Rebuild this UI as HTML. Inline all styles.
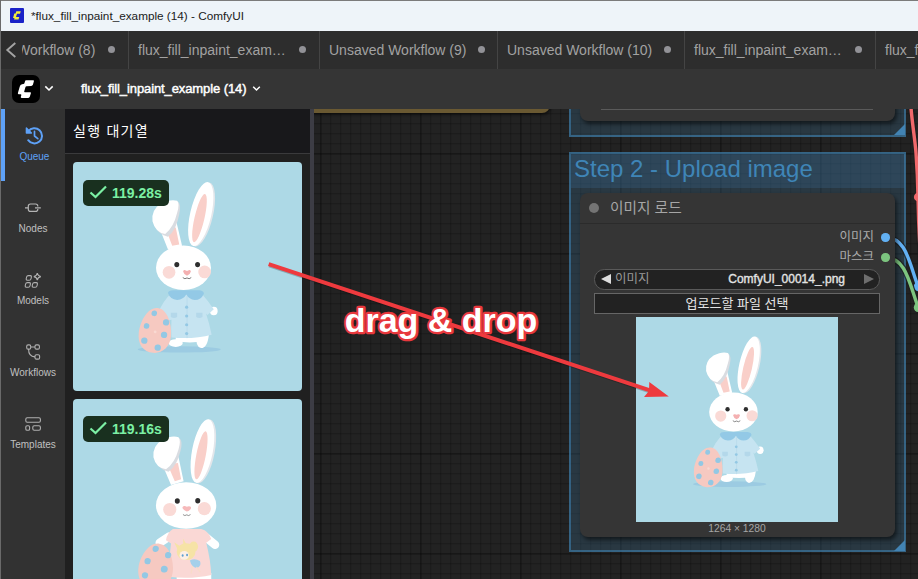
<!DOCTYPE html>
<html lang="ko">
<head>
<meta charset="utf-8">
<title>*flux_fill_inpaint_example (14) - ComfyUI</title>
<style>
*{box-sizing:border-box;margin:0;padding:0}
html,body{width:918px;height:579px;overflow:hidden;background:#222}
body{position:relative;font-family:"Liberation Sans","Noto Sans CJK KR",sans-serif;color:#ddd}
.abs{position:absolute}
#win{position:absolute;left:0;top:0;width:918px;height:579px;overflow:hidden;background:#222}
/* title bar */
#titlebar{left:0;top:0;width:918px;height:31px;background:#eef4f9;border-top:1px solid #7b7b7b}
#titlebar .ico{left:10px;top:6.5px;width:14px;height:15px;background:#1a22c8;border-radius:1px}
#titlebar .txt{left:31px;top:7px;font-size:11.75px;line-height:16px;color:#1b1b1b;white-space:nowrap}
/* tab bar */
#tabbar{left:0;top:31px;width:918px;height:38px;background:#2d2d2d}
.tab{position:absolute;top:0;height:38px;border-right:1px solid #444;font-size:14px;line-height:38px;color:#a2a2a2;white-space:nowrap;overflow:hidden}
.tab .t{position:absolute;top:0;left:9px}
.tab .dot{position:absolute;top:15px;width:7px;height:7px;border-radius:50%;background:#929297;margin-left:-.6px}
/* menu bar */
#menubar{left:0;top:69px;width:918px;height:40px;background:#353535}
#logo{left:12px;top:75px;width:28px;height:28px;border-radius:7px;background:#000}
#wfname{left:81px;top:80px;font-size:13px;line-height:18px;color:#fff;white-space:nowrap;letter-spacing:-0.1px;-webkit-text-stroke:.45px #fff}
/* sidebar */
#sidebar{left:0;top:109px;width:65px;height:470px;background:#323232}
.sitem{position:absolute;left:1px;width:64px;height:72px;text-align:center;font-size:10px;color:#c0c0c0}
.sitem .lbl{position:absolute;left:0;width:64px;top:42.4px;line-height:12px;font-size:10px}
.sitem svg{position:absolute}
#activebar{left:1px;top:109px;width:4px;height:72px;background:#5ea1f7}
/* queue panel */
#panel{left:65px;top:109px;width:245px;height:470px;background:#202020}
#panelhead{left:65px;top:109px;width:245px;height:45px;background:#18181b;border-bottom:1px solid #3a3a3c}
#panelhead span{position:absolute;left:8px;top:12px;font-size:14px;letter-spacing:1.25px;line-height:20px;color:#fff;white-space:nowrap}
#splitter{left:310px;top:109px;width:4px;height:470px;background:#3d3d45}
.card{position:absolute;left:73px;width:229px;border-radius:4px;background:#add9e6;overflow:hidden}
.badge{position:absolute;left:10px;top:18px;width:86px;height:26px;border-radius:5px;background:#19301f;color:#7cf0a4;font-weight:bold;font-size:14px;line-height:26px;white-space:nowrap}
.badge span{position:absolute;left:29px;top:0}
.badge svg{position:absolute;left:6px;top:5px}
/* canvas */
#canvas{left:314px;top:109px;width:604px;height:470px;overflow:hidden;background-color:#222;
background-image:
linear-gradient(to right,rgba(0,0,0,.16) 0,rgba(0,0,0,.16) 2px,transparent 2px),
linear-gradient(to bottom,rgba(0,0,0,.16) 0,rgba(0,0,0,.16) 2px,transparent 2px),
linear-gradient(to right,rgba(0,0,0,.19) 0,rgba(0,0,0,.19) 1px,rgba(0,0,0,.05) 1px,rgba(0,0,0,.05) 2px,transparent 2px),
linear-gradient(to bottom,rgba(0,0,0,.19) 0,rgba(0,0,0,.19) 1px,rgba(0,0,0,.05) 1px,rgba(0,0,0,.05) 2px,transparent 2px);
background-size:100px 100px,100px 100px,10px 10px,10px 10px;
background-position:6px 0,0 44px,6px 0,0 4px}
.group{position:absolute;border:2px solid rgba(62,128,174,.7);background:rgba(63,125,165,.25);background-clip:padding-box}
.node{position:absolute;background:#353535;border-radius:8px;box-shadow:2px 3px 4px rgba(0,0,0,.55)}
</style>
</head>
<body>
<div id="win">

<!-- ===== canvas ===== -->
<div id="canvas" class="abs">
  <!-- yellow node bottom edge -->
  <div class="abs" style="left:-10px;top:-10px;width:246px;height:14px;background:#6a5932;border-radius:0 0 8px 0;box-shadow:1px 2px 3px rgba(0,0,0,.5)"></div>

  <!-- group 1 (top, clipped) -->
  <div class="group" style="left:255px;top:-40px;width:337px;height:67.5px"></div>
  <div class="node" style="left:266px;top:-30px;width:315px;height:42px"></div>
  <div class="abs" style="left:287px;top:0;width:272px;height:1px;background:#5a5a5a"></div>
  <svg class="abs" style="left:580px;top:15px" width="12" height="12"><path d="M11 0V11H0Z" fill="#4283b3"/></svg>

  <!-- group 2 -->
  <div class="group" style="left:255px;top:43.4px;width:337px;height:400px"></div>
  <div class="abs" style="left:257px;top:45px;width:334px;height:34px;background:rgba(63,125,175,.22)"></div>
  <div class="abs" style="left:260px;top:45px;font-size:24px;line-height:30px;color:#3f85b7;white-space:nowrap">Step 2 - Upload image</div>
  <svg class="abs" style="left:580px;top:431px" width="12" height="12"><path d="M11 0V11H0Z" fill="#4283b3"/></svg>

  <!-- links -->
  <svg class="abs" style="left:560px;top:0" width="44" height="240" viewBox="560 0 44 240">
    <path d="M596.8 -4 C598 14 601 30 602 44 C603.2 60 603.8 75 604 88 C604.3 100 604.5 105 604.6 111 L606 141 L607 200" fill="none" stroke="#1c1c1c" stroke-opacity=".6" stroke-width="5.5"/>
    <path d="M596.8 -4 C598 14 601 30 602 44 C603.2 60 603.8 75 604 88 C604.3 100 604.5 105 604.6 111 L606 141 L607 200" fill="none" stroke="#f0686b" stroke-width="3.4"/>
    <circle cx="604.2" cy="88" r="4.3" fill="#f0686b"/>
    <path d="M571.5 128.4 C592 128.4 595 153 604 177.4 L612 200" fill="none" stroke="#1c1c1c" stroke-opacity=".7" stroke-width="6"/>
    <path d="M571.5 128.4 C592 128.4 595 153 604 177.4 L612 200" fill="none" stroke="#62b0f3" stroke-width="3.4"/>
    <circle cx="604.4" cy="177.6" r="4.6" fill="#62b0f3"/>
    <path d="M571.5 148.8 C592 148.8 595 173.4 604 198 L612 220" fill="none" stroke="#1c1c1c" stroke-opacity=".7" stroke-width="6"/>
    <path d="M571.5 148.8 C592 148.8 595 173.4 604 198 L612 220" fill="none" stroke="#7cc47f" stroke-width="3.4"/>
    <circle cx="604.4" cy="198.4" r="4.6" fill="#7cc47f"/>
  </svg>

  <!-- node: load image -->
  <div class="node" style="left:266px;top:84px;width:315px;height:344px">
    <div class="abs" style="left:0;top:30px;width:315px;height:1px;background:#2b2b2b"></div>
    <div class="abs" style="left:9px;top:10px;width:10px;height:10px;border-radius:50%;background:#747474"></div>
    <div class="abs" style="left:30px;top:5px;font-size:14.7px;line-height:20px;color:#a6a6a6;white-space:nowrap">이미지 로드</div>
    <div class="abs" style="right:21px;top:34px;font-size:12.5px;line-height:20px;color:#ababab;white-space:nowrap">이미지</div>
    <div class="abs" style="right:21px;top:54px;font-size:12.5px;line-height:20px;color:#ababab;white-space:nowrap">마스크</div>
    <div class="abs" style="left:301.3px;top:24.2px;margin-top:16px;width:8.4px;height:8.4px;border-radius:50%;background:#62b0f3"></div>
    <div class="abs" style="left:301.3px;top:44.3px;margin-top:16px;width:8.4px;height:8.4px;border-radius:50%;background:#7cc47f"></div>
    <!-- combo -->
    <div class="abs" style="left:14px;top:76px;width:286px;height:20.5px;border-radius:10.25px;background:#222;border:1px solid #5a5a5a"></div>
    <svg class="abs" style="left:21px;top:81px" width="10" height="10"><path d="M10 0V10L0 5Z" fill="#ddd"/></svg>
    <svg class="abs" style="left:284px;top:81px" width="10" height="10"><path d="M0 0V10L10 5Z" fill="#6e6e6e"/></svg>
    <div class="abs" style="left:35px;top:76px;font-size:12.5px;line-height:20px;color:#999;white-space:nowrap">이미지</div>
    <div class="abs" style="right:50px;top:76px;font-size:12px;line-height:20px;color:#e4e4e4;white-space:nowrap;-webkit-text-stroke:.35px #e4e4e4">ComfyUI_00014_.png</div>
    <!-- button -->
    <div class="abs" style="left:14px;top:100px;width:286px;height:21px;background:#222;border:1px solid #666;text-align:center;font-size:13px;line-height:19px;color:#e4e4e4;white-space:nowrap">업로드할 파일 선택</div>
    <!-- preview -->
    <div class="abs" style="left:56px;top:124px;width:202px;height:205px;background:#add9e6;overflow:hidden">
      <svg width="202" height="204.5" viewBox="0 0 202 204.5" style="display:block"><g transform="translate(44,8) scale(0.3108)">
      <ellipse cx="160" cy="512" rx="118" ry="9" fill="#9ccbe2"/>
      <!-- right ear -->
      <g transform="rotate(13 222 128)">
        <ellipse cx="225" cy="128" rx="31" ry="93" fill="#e3e6ea"/>
        <ellipse cx="221" cy="128" rx="30" ry="93" fill="#fff"/>
        <ellipse cx="220" cy="140" rx="14" ry="70" fill="#f9cfc9"/>
      </g>
      <!-- left ear -->
      <path d="M128 228 L104 168 Q125 148 152 150 L168 218 Z" fill="#fff"/>
      <path d="M140 218 L124 176 Q136 166 150 166 L160 214 Z" fill="#f9cfc9"/>
      <path d="M88 152 Q84 120 112 102 Q140 86 156 92 Q166 100 160 128 Q152 172 128 192 Q96 186 88 152 Z" fill="#d9dce1"/>
      <path d="M84 148 Q80 116 108 98 Q136 84 154 90 Q162 98 154 124 Q144 166 120 184 Q92 180 84 148 Z" fill="#fff"/>
      <!-- legs -->
      <ellipse cx="150" cy="494" rx="20" ry="11" fill="#fff"/>
      <path d="M208 470 L244 470 Q240 508 222 508 Q206 506 208 470 Z" fill="#fff"/>
      <path d="M150 470 H230 V488 Q190 496 150 488 Z" fill="#fff"/>
      <!-- hand -->
      <ellipse cx="258" cy="403" rx="11" ry="12" fill="#fff"/>
      <!-- coat -->
      <path d="M138 352 H222 Q240 372 258 398 L240 414 L236 410 Q246 440 252 470 Q200 484 138 478 Q136 452 138 428 L110 432 Q98 424 100 410 Q112 376 138 352 Z" fill="#c6e4f1"/>
      <path d="M182 360 V480" stroke="#b4d8ea" stroke-width="2" fill="none"/>
      <path d="M136 408 H154 V420 Q145 426 136 420 Z M208 408 H226 V420 Q217 426 208 420 Z" fill="#b4d8ea"/>
      <circle cx="181" cy="392" r="4.5" fill="#93c8e4"/><circle cx="181" cy="417" r="4.5" fill="#93c8e4"/><circle cx="181" cy="442" r="4.5" fill="#93c8e4"/><circle cx="181" cy="467" r="4.5" fill="#93c8e4"/>
      <!-- collar -->
      <path d="M128 352 Q130 344 142 344 H218 Q230 346 230 354 Q222 372 204 372 Q188 370 180 356 Q172 370 154 372 Q134 370 128 352 Z" fill="#93c9e6"/>
      <!-- head -->
      <ellipse cx="172" cy="280" rx="78" ry="63" fill="#fff"/>
      <circle cx="131" cy="293" r="18" fill="#fadad6"/><circle cx="232" cy="292" r="18" fill="#fadad6"/>
      <ellipse cx="153" cy="271" rx="7" ry="7.5" fill="#2e2e2e"/><ellipse cx="212" cy="271" rx="7" ry="7.5" fill="#2e2e2e"/>
      <path d="M171 291 Q172 286 177 287 L182 289 L187 287 Q192 286 193 291 Q192 298 182 303 Q172 298 171 291 Z" fill="#f4b0b1"/>
      <path d="M170 308 Q176 314 182 309 Q188 314 194 308" stroke="#444" stroke-width="2" fill="none"/>
      <!-- egg -->
      <g transform="rotate(6 92 458)">
        <path d="M92 394 C122 394 138 440 138 470 C138 502 118 522 92 522 C64 522 46 502 46 470 C46 440 62 394 92 394 Z" fill="#f6c9c1"/>
        <circle cx="84" cy="410" r="8" fill="#93c8e4"/><circle cx="120" cy="432" r="9" fill="#93c8e4"/><circle cx="66" cy="448" r="8" fill="#93c8e4"/><circle cx="118" cy="468" r="9" fill="#93c8e4"/><circle cx="64" cy="490" r="9" fill="#93c8e4"/><circle cx="104" cy="506" r="9" fill="#93c8e4"/><circle cx="92" cy="462" r="4" fill="#f9d9d2"/>
      </g>
    </g></svg>
    </div>
    <div class="abs" style="left:56px;top:329px;width:202px;text-align:center;font-size:10.3px;line-height:14px;color:#a6a6a6;white-space:nowrap">1264 × 1280</div>
  </div>

</div>

<!-- ===== queue panel ===== -->
<div id="panel" class="abs"></div>
<div id="panelhead" class="abs"><span>실행 대기열</span></div>
<div id="splitter" class="abs"></div>

<div class="card" style="top:162px;height:229px">
  <svg class="abs" style="left:0;top:-2px" width="229" height="231.8" viewBox="0 0 202 204.5"><g transform="translate(44,8) scale(0.3108)">
      <ellipse cx="160" cy="512" rx="118" ry="9" fill="#9ccbe2"/>
      <!-- right ear -->
      <g transform="rotate(13 222 128)">
        <ellipse cx="225" cy="128" rx="31" ry="93" fill="#e3e6ea"/>
        <ellipse cx="221" cy="128" rx="30" ry="93" fill="#fff"/>
        <ellipse cx="220" cy="140" rx="14" ry="70" fill="#f9cfc9"/>
      </g>
      <!-- left ear -->
      <path d="M128 228 L104 168 Q125 148 152 150 L168 218 Z" fill="#fff"/>
      <path d="M140 218 L124 176 Q136 166 150 166 L160 214 Z" fill="#f9cfc9"/>
      <path d="M88 152 Q84 120 112 102 Q140 86 156 92 Q166 100 160 128 Q152 172 128 192 Q96 186 88 152 Z" fill="#d9dce1"/>
      <path d="M84 148 Q80 116 108 98 Q136 84 154 90 Q162 98 154 124 Q144 166 120 184 Q92 180 84 148 Z" fill="#fff"/>
      <!-- legs -->
      <ellipse cx="150" cy="494" rx="20" ry="11" fill="#fff"/>
      <path d="M208 470 L244 470 Q240 508 222 508 Q206 506 208 470 Z" fill="#fff"/>
      <path d="M150 470 H230 V488 Q190 496 150 488 Z" fill="#fff"/>
      <!-- hand -->
      <ellipse cx="258" cy="403" rx="11" ry="12" fill="#fff"/>
      <!-- coat -->
      <path d="M138 352 H222 Q240 372 258 398 L240 414 L236 410 Q246 440 252 470 Q200 484 138 478 Q136 452 138 428 L110 432 Q98 424 100 410 Q112 376 138 352 Z" fill="#c6e4f1"/>
      <path d="M182 360 V480" stroke="#b4d8ea" stroke-width="2" fill="none"/>
      <path d="M136 408 H154 V420 Q145 426 136 420 Z M208 408 H226 V420 Q217 426 208 420 Z" fill="#b4d8ea"/>
      <circle cx="181" cy="392" r="4.5" fill="#93c8e4"/><circle cx="181" cy="417" r="4.5" fill="#93c8e4"/><circle cx="181" cy="442" r="4.5" fill="#93c8e4"/><circle cx="181" cy="467" r="4.5" fill="#93c8e4"/>
      <!-- collar -->
      <path d="M128 352 Q130 344 142 344 H218 Q230 346 230 354 Q222 372 204 372 Q188 370 180 356 Q172 370 154 372 Q134 370 128 352 Z" fill="#93c9e6"/>
      <!-- head -->
      <ellipse cx="172" cy="280" rx="78" ry="63" fill="#fff"/>
      <circle cx="131" cy="293" r="18" fill="#fadad6"/><circle cx="232" cy="292" r="18" fill="#fadad6"/>
      <ellipse cx="153" cy="271" rx="7" ry="7.5" fill="#2e2e2e"/><ellipse cx="212" cy="271" rx="7" ry="7.5" fill="#2e2e2e"/>
      <path d="M171 291 Q172 286 177 287 L182 289 L187 287 Q192 286 193 291 Q192 298 182 303 Q172 298 171 291 Z" fill="#f4b0b1"/>
      <path d="M170 308 Q176 314 182 309 Q188 314 194 308" stroke="#444" stroke-width="2" fill="none"/>
      <!-- egg -->
      <g transform="rotate(6 92 458)">
        <path d="M92 394 C122 394 138 440 138 470 C138 502 118 522 92 522 C64 522 46 502 46 470 C46 440 62 394 92 394 Z" fill="#f6c9c1"/>
        <circle cx="84" cy="410" r="8" fill="#93c8e4"/><circle cx="120" cy="432" r="9" fill="#93c8e4"/><circle cx="66" cy="448" r="8" fill="#93c8e4"/><circle cx="118" cy="468" r="9" fill="#93c8e4"/><circle cx="64" cy="490" r="9" fill="#93c8e4"/><circle cx="104" cy="506" r="9" fill="#93c8e4"/><circle cx="92" cy="462" r="4" fill="#f9d9d2"/>
      </g>
    </g></svg>
  <div class="badge"><svg width="19" height="14" viewBox="0 0 19 14"><path d="M1.5 7.5 L6.5 12 L17 1.5" fill="none" stroke="#7cf0a4" stroke-width="2.2"/></svg><span>119.28s</span></div>
</div>
<div class="card" style="top:399px;height:190px">
  <svg class="abs" style="left:0;top:-2px" width="230" height="182" viewBox="0 0 732 579"><g>
      <!-- right ear -->
      <g transform="rotate(11 412 172)">
        <ellipse cx="417" cy="172" rx="34" ry="103" fill="#e3e6ea"/>
        <ellipse cx="412" cy="172" rx="33" ry="103" fill="#fff"/>
        <ellipse cx="410" cy="186" rx="15" ry="78" fill="#f9cfc9"/>
      </g>
      <!-- left ear -->
      <path d="M312 280 L284 214 Q306 190 336 192 L352 268 Z" fill="#fff"/>
      <path d="M324 268 L304 222 Q318 210 334 210 L344 262 Z" fill="#f9cfc9"/>
      <path d="M262 196 Q256 160 288 140 Q320 124 340 132 Q350 142 342 172 Q332 218 304 238 Q270 232 262 196 Z" fill="#d9dce1"/>
      <path d="M256 192 Q252 156 284 136 Q316 120 336 128 Q344 138 336 166 Q324 210 296 230 Q264 226 256 192 Z" fill="#fff"/>
      <!-- arms -->
      <path d="M306 444 L276 464" stroke="#fff" stroke-width="27" stroke-linecap="round" fill="none"/>
      <path d="M420 444 L452 470" stroke="#fff" stroke-width="27" stroke-linecap="round" fill="none"/>
      <!-- legs -->
      <path d="M330 560 H440 V590 H330 Z" fill="#fff"/>
      <!-- shirt -->
      <path d="M318 420 H408 Q432 426 440 452 L424 464 Q438 520 440 566 Q380 580 304 572 Q304 520 312 466 L296 456 Q300 430 318 420 Z" fill="#fad8d5"/>
      <!-- print -->
      <path d="M322 462 L334 488 L346 478 Z M350 450 L352 478 L364 474 Z" fill="#f6e3a6"/>
      <ellipse cx="360" cy="492" rx="30" ry="27" fill="#f6e3a6"/>
      <ellipse cx="384" cy="476" rx="14" ry="16" fill="#f6e3a6"/>
      <ellipse cx="354" cy="504" rx="15" ry="14" fill="#fcefe6"/>
      <ellipse cx="349" cy="504" rx="3" ry="4" fill="#5c9ed0"/><ellipse cx="363" cy="503" rx="3" ry="4" fill="#5c9ed0"/>
      <path d="M372 520 Q388 512 404 522 Q410 536 396 544 Q378 544 372 520 Z" fill="#a5d0ea"/>
      <path d="M380 540 L376 560 M394 542 L404 556" stroke="#f8dcc8" stroke-width="4" stroke-linecap="round"/>
      <!-- head -->
      <ellipse cx="360" cy="345" rx="96" ry="74" fill="#fff"/>
      <circle cx="308" cy="358" r="21" fill="#fadad6"/><circle cx="418" cy="355" r="21" fill="#fadad6"/>
      <ellipse cx="332" cy="331" rx="8" ry="8.5" fill="#2e2e2e"/><ellipse cx="397" cy="330" rx="8" ry="8.5" fill="#2e2e2e"/>
      <path d="M348 352 Q349 346 356 347 Q362 349 362 349 Q368 346 373 348 Q378 351 374 357 Q368 364 362 364 Q353 363 348 352 Z" fill="#f6b9ba"/>
      <path d="M350 374 Q356 380 362 375 Q368 380 374 374" stroke="#555" stroke-width="2" fill="none"/>
      <!-- egg -->
      <g transform="rotate(8 265 535)">
        <path d="M265 466 C300 466 320 516 320 550 C320 588 296 610 265 610 C232 610 210 588 210 550 C210 516 230 466 265 466 Z" fill="#f6c9c1"/>
        <circle cx="256" cy="484" r="10" fill="#93c8e4"/><circle cx="298" cy="498" r="10" fill="#93c8e4"/><circle cx="236" cy="526" r="10" fill="#93c8e4"/><circle cx="292" cy="544" r="11" fill="#93c8e4"/><circle cx="234" cy="572" r="10" fill="#93c8e4"/>
      </g>
    </g></svg>
  <div class="badge" style="top:17px"><svg width="19" height="14" viewBox="0 0 19 14"><path d="M1.5 7.5 L6.5 12 L17 1.5" fill="none" stroke="#7cf0a4" stroke-width="2.2"/></svg><span>119.16s</span></div>
</div>

<!-- ===== sidebar ===== -->
<div id="sidebar" class="abs"></div>
<div id="activebar" class="abs"></div>
<div class="sitem" style="top:109px;color:#5ea1f7"><svg style="left:0;top:0" width="64" height="72" viewBox="0 0 64 72"><path d="M27.3 22.3 A7.6 7.6 0 1 1 27.2 31.2" fill="none" stroke="#5ea1f7" stroke-width="2" stroke-linecap="round"/><path d="M25.4 19 V24 H30.4 Z" fill="#5ea1f7" stroke="#5ea1f7" stroke-width="1.4" stroke-linejoin="round"/><path d="M33.5 22.4 V27 L36.8 29.6" fill="none" stroke="#5ea1f7" stroke-width="1.7" stroke-linecap="round" stroke-linejoin="round"/></svg><div class="lbl" style="left:1.4px;top:41.6px">Queue</div></div>
<div class="sitem" style="top:181px"><svg style="left:0;top:0" width="64" height="72" viewBox="0 0 64 72"><path d="M36.8 25.5 V25.2 Q36.8 23 34.6 23 H29.5 Q27.3 23 27.3 25.2 V28.2 Q27.3 30.4 29.5 30.4 H34.6 Q36.8 30.4 36.8 28.2 V28 M24 26.8 H27.3 M34 26.8 H39.8" fill="none" stroke="#b4b4b4" stroke-width="1.2"/></svg><div class="lbl">Nodes</div></div>
<div class="sitem" style="top:253px"><svg style="left:0;top:0" width="64" height="72" viewBox="0 0 64 72"><g fill="none" stroke="#b0b0b0" stroke-width="1.1"><rect x="25.4" y="22.6" width="4.8" height="4.6" rx="1.4" transform="skewX(-12) translate(5.3 0)"/><rect x="24.4" y="29.6" width="4.8" height="4.6" rx="1.4" transform="skewX(-12) translate(6.8 0)"/><rect x="31.4" y="29.6" width="4.8" height="4.6" rx="1.4" transform="skewX(-12) translate(6.8 0)"/><path d="M36.3 20 Q36.8 23 39.8 23.6 Q36.8 24.2 36.3 27.2 Q35.8 24.2 32.8 23.6 Q35.8 23 36.3 20 Z"/></g></svg><div class="lbl">Models</div></div>
<div class="sitem" style="top:325px"><svg style="left:0;top:0" width="64" height="72" viewBox="0 0 64 72"><g fill="none" stroke="#b0b0b0" stroke-width="1.1"><rect x="25.7" y="19.9" width="4" height="4.2" rx="1.4"/><rect x="34" y="19.9" width="4.4" height="4.2" rx="1.4"/><rect x="34" y="29.7" width="4.6" height="4.4" rx="1.4"/><path d="M29.7 22 H34 M27.6 24.1 Q27.4 31.6 34 31.9"/></g></svg><div class="lbl">Workflows</div></div>
<div class="sitem" style="top:397px"><svg style="left:0;top:0" width="64" height="72" viewBox="0 0 64 72"><g fill="none" stroke="#b0b0b0" stroke-width="1.1"><rect x="24.8" y="20.8" width="14.6" height="4.4" rx="1.4"/><rect x="24.8" y="28.8" width="3.8" height="4.4" rx="1.3"/><rect x="31.8" y="28.8" width="7.6" height="4.4" rx="1.4"/></g></svg><div class="lbl">Templates</div></div>

<!-- ===== top bars ===== -->
<div id="menubar" class="abs"></div>
<div id="logo" class="abs"><svg width="28" height="28" viewBox="0 0 28 28" style="display:block"><path d="M13.3 5.6 Q13.6 5.2 14.4 5.2 H21.2 Q22.2 5.3 21.9 6.3 L20.9 9.8 Q20.4 10.9 19.2 11 L14.6 11.2 Q13.7 11.3 13.5 12.1 L12.2 16.4 Q12 17.2 12.9 17.2 H18.2 Q19.2 17.3 18.9 18.3 L17.7 22 Q17.3 22.8 16.3 22.9 H9.6 Q8.5 22.8 8.8 21.8 L9.3 20.2 Q9.5 19.4 8.6 19.3 L6.6 19.2 Q5.6 19.1 5.9 18.1 L7.7 11.7 Q8.2 9.6 10 9.2 L11.4 9 Q12.3 8.8 12.5 8 Z" fill="#fff"/></svg></div>
<svg class="abs" style="left:44px;top:84px" width="10" height="8" viewBox="0 0 10 8"><path d="M1.3 2.4 L5 6 L8.7 2.4" fill="none" stroke="#fff" stroke-width="1.6"/></svg>
<svg class="abs" style="left:252px;top:85px" width="9" height="7" viewBox="0 0 9 7"><path d="M1.2 1.8 L4.5 5 L7.8 1.8" fill="none" stroke="#fff" stroke-width="1.5"/></svg>
<div id="wfname" class="abs">flux_fill_inpaint_example (14)</div>

<div id="tabbar" class="abs">
  <div class="tab" style="left:0;width:129px"><span class="t" style="left:17px">Workflow (8)</span><span class="dot" style="left:109px"></span><span style="position:absolute;left:0;top:0;width:22px;height:38px;background:#2d2d2d"></span><svg style="position:absolute;left:5px;top:10px" width="12" height="18" viewBox="0 0 12 18"><path d="M10.3 2 L2.3 9 L10.3 16" fill="none" stroke="#a4a4a4" stroke-width="1.9"/></svg></div>
  <div class="tab" style="left:129px;width:191px"><span class="t">flux_fill_inpaint_exam…</span><span class="dot" style="left:171px"></span></div>
  <div class="tab" style="left:320px;width:178px"><span class="t">Unsaved Workflow (9)</span><span class="dot" style="left:159px"></span></div>
  <div class="tab" style="left:498px;width:187px"><span class="t">Unsaved Workflow (10)</span><span class="dot" style="left:167px"></span></div>
  <div class="tab" style="left:685px;width:191px"><span class="t">flux_fill_inpaint_exam…</span><span class="dot" style="left:171px"></span></div>
  <div class="tab" style="left:876px;width:60px;border-right:none"><span class="t">flux_fill</span></div>
</div>

<div id="titlebar" class="abs">
  <div class="ico abs"><svg width="14" height="15" viewBox="0 0 14 15" style="display:block"><path d="M6.3 3.2 H10.8 L10 5.8 H7 L6 9 H9.3 L8.5 11.6 H4 L4.5 10 H3 L4.3 5.5 H5.6 Z" fill="#f2ee3a"/></svg></div>
  <div class="txt abs">*flux_fill_inpaint_example (14) - ComfyUI</div>
</div>

<!-- window left border -->
<div class="abs" style="left:0;top:0;width:1px;height:579px;background:#6a6a6a"></div>

<!-- ===== annotation ===== -->
<svg class="abs" style="left:0;top:0" width="918" height="579" viewBox="0 0 918 579">
  
  <line x1="269.2" y1="265.4" x2="650.5" y2="391.6" stroke="#000" stroke-opacity=".22" stroke-width="4"/>
  <line x1="268.7" y1="264.2" x2="650" y2="390.4" stroke="#ee3a3e" stroke-width="4"/>
  <path d="M668.8 396.6 L649.3 382 L649 391 L644 397 Z" fill="#ee3a3e"/>
  <text x="441" y="332" text-anchor="middle" font-family="Liberation Sans, sans-serif" font-weight="bold" font-size="34" fill="#fff" stroke="#e8383d" stroke-width="4.6" stroke-linejoin="round" paint-order="stroke">drag &amp; drop</text>
</svg>

</div>
</body>
</html>
